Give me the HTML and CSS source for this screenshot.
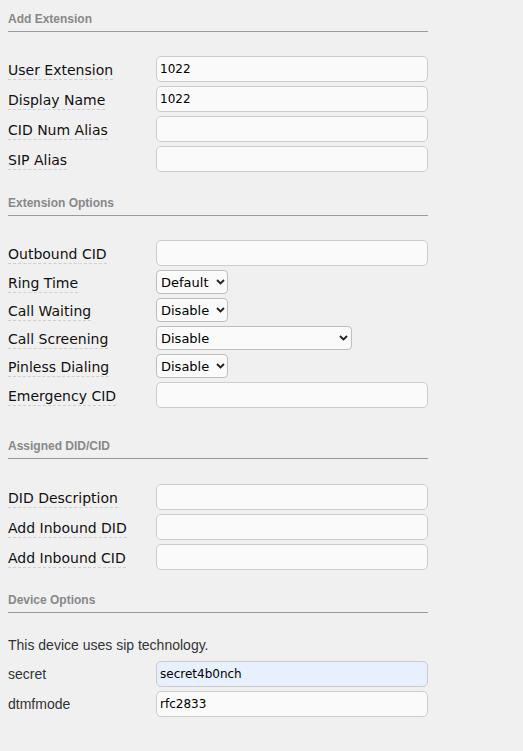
FILE: index.html
```html
<!DOCTYPE html>
<html>
<head>
  <title>Add Extension</title>
  <link rel="stylesheet" href="styles.css">
</head>
<body>
  <form class="ext-form">

    <!-- Add Extension -->
    <div class="section section-first">
      <h5 class="section-title">Add Extension</h5>
      <div class="row">
        <label class="tip" for="extension">User Extension</label>
        <input type="text" id="extension" value="1022">
      </div>
      <div class="row">
        <label class="tip" for="name">Display Name</label>
        <input type="text" id="name" value="1022">
      </div>
      <div class="row">
        <label class="tip" for="cid_masquerade">CID Num Alias</label>
        <input type="text" id="cid_masquerade" value="">
      </div>
      <div class="row">
        <label class="tip" for="sipname">SIP Alias</label>
        <input type="text" id="sipname" value="">
      </div>
    </div>

    <!-- Extension Options -->
    <div class="section section-options">
      <h5 class="section-title">Extension Options</h5>
      <div class="row">
        <label class="tip" for="outboundcid">Outbound CID</label>
        <input type="text" id="outboundcid" value="">
      </div>
      <div class="row row-select">
        <label class="tip" for="ringtimer">Ring Time</label>
        <span class="select-wrap">
          <select id="ringtimer" class="select-short"><option>Default</option></select>
          <svg class="chevron" width="9" height="6" viewBox="0 0 9 6"><path d="M1 1l3.5 3.5L8 1" fill="none" stroke="#222" stroke-width="1.8"/></svg>
        </span>
      </div>
      <div class="row row-select">
        <label class="tip" for="callwaiting">Call Waiting</label>
        <span class="select-wrap">
          <select id="callwaiting" class="select-short"><option>Disable</option></select>
          <svg class="chevron" width="9" height="6" viewBox="0 0 9 6"><path d="M1 1l3.5 3.5L8 1" fill="none" stroke="#222" stroke-width="1.8"/></svg>
        </span>
      </div>
      <div class="row row-select">
        <label class="tip" for="callscreen">Call Screening</label>
        <span class="select-wrap">
          <select id="callscreen" class="select-long"><option>Disable</option></select>
          <svg class="chevron" width="9" height="6" viewBox="0 0 9 6"><path d="M1 1l3.5 3.5L8 1" fill="none" stroke="#222" stroke-width="1.8"/></svg>
        </span>
      </div>
      <div class="row row-select">
        <label class="tip" for="pinless">Pinless Dialing</label>
        <span class="select-wrap">
          <select id="pinless" class="select-short"><option>Disable</option></select>
          <svg class="chevron" width="9" height="6" viewBox="0 0 9 6"><path d="M1 1l3.5 3.5L8 1" fill="none" stroke="#222" stroke-width="1.8"/></svg>
        </span>
      </div>
      <div class="row">
        <label class="tip" for="emergency_cid">Emergency CID</label>
        <input type="text" id="emergency_cid" value="">
      </div>
    </div>

    <!-- Assigned DID/CID -->
    <div class="section section-did">
      <h5 class="section-title">Assigned DID/CID</h5>
      <div class="row">
        <label class="tip" for="newdid_name">DID Description</label>
        <input type="text" id="newdid_name" value="">
      </div>
      <div class="row">
        <label class="tip" for="newdid">Add Inbound DID</label>
        <input type="text" id="newdid" value="">
      </div>
      <div class="row">
        <label class="tip" for="newdidcid">Add Inbound CID</label>
        <input type="text" id="newdidcid" value="">
      </div>
    </div>

    <!-- Device Options -->
    <div class="section section-device">
      <h5 class="section-title">Device Options</h5>
      <p class="device-note">This device uses sip technology.</p>
      <div class="row">
        <label class="plain" for="devinfo_secret">secret</label>
        <input type="text" id="devinfo_secret" class="autofilled" value="secret4b0nch">
      </div>
      <div class="row">
        <label class="plain" for="devinfo_dtmfmode">dtmfmode</label>
        <input type="text" id="devinfo_dtmfmode" value="rfc2833">
      </div>
    </div>

  </form>
</body>
</html>
```

FILE: styles.css
```css
body {
  margin: 0;
  padding: 10px 8px;
  background-color: #f0f0f0;
  font-family: "DejaVu Sans", Verdana, sans-serif;
  font-size: 13px;
  color: #000;
}

.ext-form {
  width: 420px;
}

/* Section headings */
.section-title {
  margin: 0 0 24px 0;
  padding: 2px 0 5px 0;
  border-bottom: 1px solid #9a9a9a;
  font-family: "Liberation Sans", Arial, sans-serif;
  font-size: 12px;
  line-height: 14px;
  font-weight: bold;
  color: #888;
}

.section-options {
  margin-top: 22px;
}

.section-did {
  margin-top: 29px;
}

.section-did .section-title {
  margin-bottom: 25px;
}

.section-device {
  margin-top: 21px;
}

/* Form rows */
.row {
  display: flex;
  align-items: center;
  margin-bottom: 4px;
}

.row label {
  width: 148px;
  flex-shrink: 0;
}

.tip {
  display: block;
  flex: 0 0 auto;
  padding-top: 3px;
  font-size: 14px;
  line-height: 17px;
  color: #111;
  border-bottom: 1px dashed #cfcfcf;
}

.row .tip {
  width: auto;
}

.row .tip + input,
.row .tip + .select-wrap {
  margin-left: auto;
}

.row input[type="text"] {
  width: 272px;
  height: 26px;
  box-sizing: border-box;
  padding: 0 3px;
  border: 1px solid #cccccc;
  border-radius: 5px;
  background-color: #fafafa;
  font-family: "DejaVu Sans", Verdana, sans-serif;
  font-size: 12px;
  color: #000;
}

.row input.autofilled {
  background-color: #e8f0fe;
}

/* Selects */
.select-wrap {
  position: relative;
  display: block;
  width: 272px;
  height: 24px;
}

.select-wrap select {
  -webkit-appearance: none;
  appearance: none;
  height: 24px;
  box-sizing: border-box;
  padding: 0 0 0 4px;
  border: 1px solid #bdbdbd;
  border-radius: 4px;
  background-color: #fafafa;
  font-family: "DejaVu Sans", Verdana, sans-serif;
  font-size: 13px;
  color: #000;
}

.select-short {
  width: 72px;
}

.select-long {
  width: 196px;
}

.chevron {
  position: absolute;
  top: 9px;
  pointer-events: none;
}

.select-short + .chevron {
  left: 60px;
}

.select-long + .chevron {
  left: 183px;
}

/* Device options */
.device-note {
  margin: 0 0 8px 0;
  font-family: "Liberation Sans", Arial, sans-serif;
  font-size: 14px;
  line-height: 16px;
  color: #333;
}

.plain {
  font-family: "Liberation Sans", Arial, sans-serif;
  font-size: 14px;
  color: #333;
}
```
